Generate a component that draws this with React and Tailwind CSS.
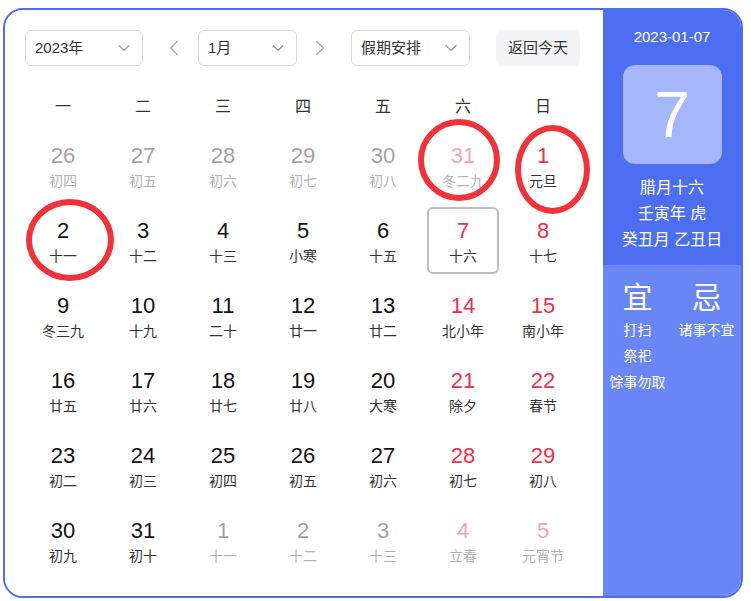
import { ChevronDown, ChevronLeft, ChevronRight } from "lucide-react";

const FONT = { fontFamily: '"Liberation Sans", Arial, "Noto Sans CJK SC", sans-serif' };

const weekNames = ["一", "二", "三", "四", "五", "六", "日"];

// kind: "prev" / "next" = other month, "cur" = this month
const days = [
  ["26", "初四", "prev"], ["27", "初五", "prev"], ["28", "初六", "prev"], ["29", "初七", "prev"], ["30", "初八", "prev"], ["31", "冬二九", "prev"], ["1", "元旦", "cur"],
  ["2", "十一", "cur"], ["3", "十二", "cur"], ["4", "十三", "cur"], ["5", "小寒", "cur"], ["6", "十五", "cur"], ["7", "十六", "cur"], ["8", "十七", "cur"],
  ["9", "冬三九", "cur"], ["10", "十九", "cur"], ["11", "二十", "cur"], ["12", "廿一", "cur"], ["13", "廿二", "cur"], ["14", "北小年", "cur"], ["15", "南小年", "cur"],
  ["16", "廿五", "cur"], ["17", "廿六", "cur"], ["18", "廿七", "cur"], ["19", "廿八", "cur"], ["20", "大寒", "cur"], ["21", "除夕", "cur"], ["22", "春节", "cur"],
  ["23", "初二", "cur"], ["24", "初三", "cur"], ["25", "初四", "cur"], ["26", "初五", "cur"], ["27", "初六", "cur"], ["28", "初七", "cur"], ["29", "初八", "cur"],
  ["30", "初九", "cur"], ["31", "初十", "cur"], ["1", "十一", "next"], ["2", "十二", "next"], ["3", "十三", "next"], ["4", "立春", "next"], ["5", "元宵节", "next"],
];

function Select({ label, width }) {
  return (
    <div className={`flex h-9 items-center justify-between rounded-md border border-[#d9d9d9] pl-[9px] pr-[8px] text-[15px] text-[#333] ${width}`}>
      <span>{label}</span>
      <ChevronDown size={20} strokeWidth={1.4} className="text-[#999]" />
    </div>
  );
}

function DayCell({ num, lunar, kind, weekend, today }) {
  const other = kind !== "cur";
  let numColor = "text-[#111]";
  let lunarColor = "text-[#333]";
  if (other) {
    numColor = weekend ? "text-[#f0a6b0]" : "text-[#a3a3a3]";
    lunarColor = "text-[#b3b3b3]";
  } else if (weekend) {
    numColor = "text-[#e8334a]";
  }
  return (
    <div className="relative flex h-[75px] flex-col items-center pt-[15px]">
      {today && <div className="absolute inset-[4px] rounded-md border-2 border-[#bdbdbd]" />}
      <span className={`text-[22px] leading-[26px] ${numColor}`}>{num}</span>
      <span className={`mt-[2px] text-[14px] leading-[20px] ${lunarColor}`}>{lunar}</span>
    </div>
  );
}

export default function App() {
  return (
    <div className="h-[601px] w-[751px] bg-white pl-[3px] pt-[8px]" style={FONT}>
      <div className="flex h-[590px] w-[740px] overflow-hidden rounded-[20px] border-2 border-[#4e6ef2]">
        <div className="relative w-[598px] shrink-0 bg-white pl-[18px] pr-[20px] pt-[20px]">
          <div className="flex items-center pl-[2px]">
            <Select label="2023年" width="w-[118px]" />
            <div className="ml-[17px] flex w-[28px] justify-center text-[#aaa]">
              <ChevronLeft size={26} strokeWidth={1.4} />
            </div>
            <div className="ml-[10px]">
              <Select label="1月" width="w-[99px]" />
            </div>
            <div className="ml-[9px] flex w-[28px] justify-center text-[#aaa]">
              <ChevronRight size={26} strokeWidth={1.4} />
            </div>
            <div className="ml-[17px]">
              <Select label="假期安排" width="w-[119px]" />
            </div>
            <button className="ml-[26px] h-9 w-[84px] rounded-md bg-[#f4f4f6] text-[15px] text-[#333]">返回今天</button>
          </div>

          <div className="mt-[20px] grid h-[42px] grid-cols-7 items-center text-center text-[16px] text-[#333]">
            {weekNames.map((w) => (
              <span key={w}>{w}</span>
            ))}
          </div>

          <div className="relative grid grid-cols-7">
            {days.map(([num, lunar, kind], i) => (
              <DayCell
                key={i}
                num={num}
                lunar={lunar}
                kind={kind}
                weekend={i % 7 >= 5}
                today={i === 12}
              />
            ))}
            {/* red hand-drawn marks */}
            <div className="absolute left-[395px] top-[-9px] h-[82px] w-[82px] rounded-[50%] border-[6px] border-[#f0333a]" />
            <div className="absolute left-[492px] top-[-3px] h-[89px] w-[75px] rounded-[50%] border-[6px] border-[#f0333a]" />
            <div className="absolute left-[3px] top-[71px] h-[82px] w-[88px] rounded-[50%] border-[6px] border-[#f0333a]" />
          </div>
        </div>

        <div className="flex w-[138px] shrink-0 flex-col text-white">
          <div className="flex h-[255px] flex-col items-center bg-[#4e6ef2] pt-[17px]">
            <span className="text-[15px] leading-[20px]">2023-01-07</span>
            <div className="mt-[18px] flex h-[99px] w-[99px] items-center justify-center rounded-xl bg-[#a6b6fa] text-[64px] leading-none">
              7
            </div>
            <div className="mt-[11px] flex flex-col items-center text-[16px] leading-[26px]">
              <span>腊月十六</span>
              <span>壬寅年 虎</span>
              <span>癸丑月 乙丑日</span>
            </div>
          </div>
          <div className="flex flex-1 bg-[#6a85f5] pt-[15px]">
            <div className="flex w-[69px] flex-col items-center">
              <span className="text-[30px] leading-[36px]">宜</span>
              <div className="mt-[1px] flex flex-col items-center text-[14px] leading-[26px]">
                <span>打扫</span>
                <span>祭祀</span>
                <span>馀事勿取</span>
              </div>
            </div>
            <div className="flex w-[69px] flex-col items-center">
              <span className="text-[30px] leading-[36px]">忌</span>
              <div className="mt-[1px] flex flex-col items-center text-[14px] leading-[26px]">
                <span>诸事不宜</span>
              </div>
            </div>
          </div>
        </div>
      </div>
    </div>
  );
}
